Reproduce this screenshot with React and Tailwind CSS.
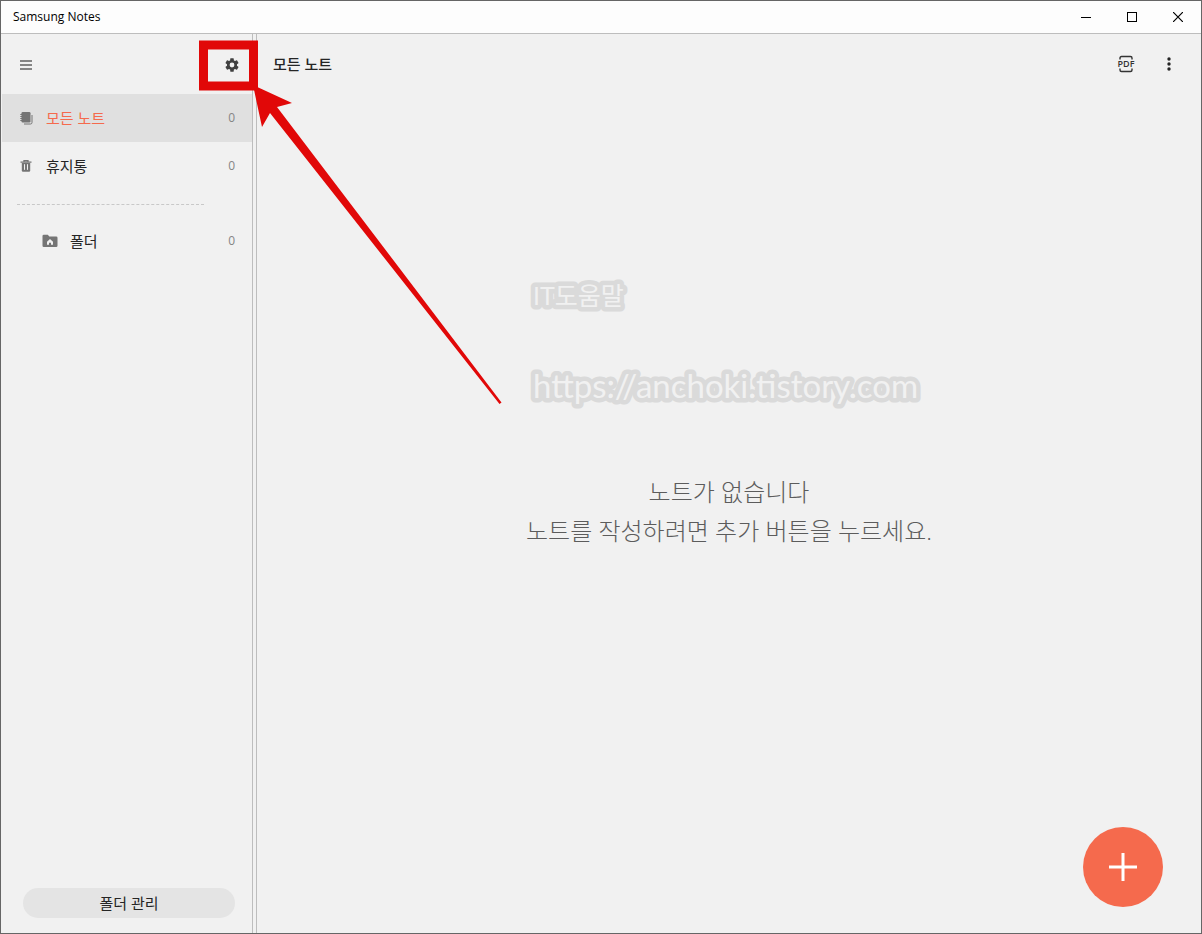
function MenuIcon() {
  return (
    <svg width="12" height="10" viewBox="0 0 12 10" fill="#858585">
      <rect width="12" height="2" />
      <rect y="4" width="12" height="2" />
      <rect y="8" width="12" height="2" />
    </svg>
  );
}

function GearIcon() {
  return (
    <svg width="16" height="16" viewBox="0 0 24 24" fill="#404040">
      <path d="M19.43 12.98c.04-.32.07-.64.07-.98s-.03-.66-.07-.98l2.11-1.65c.19-.15.24-.42.12-.64l-2-3.46c-.12-.22-.39-.3-.61-.22l-2.49 1c-.52-.4-1.08-.73-1.69-.98l-.38-2.65A.49.49 0 0 0 14 2h-4c-.25 0-.46.18-.49.42l-.38 2.65c-.61.25-1.17.59-1.69.98l-2.49-1c-.23-.09-.49 0-.61.22l-2 3.46c-.13.22-.07.49.12.64l2.11 1.65c-.04.32-.07.65-.07.98s.03.66.07.98l-2.11 1.65c-.19.15-.24.42-.12.64l2 3.46c.12.22.39.3.61.22l2.49-1c.52.4 1.08.73 1.69.98l.38 2.65c.03.24.24.42.49.42h4c.25 0 .46-.18.49-.42l.38-2.65c.61-.25 1.17-.59 1.69-.98l2.49 1c.23.09.49 0 .61-.22l2-3.46c.12-.22.07-.49-.12-.64l-2.11-1.65zM12 15.6a3.6 3.6 0 1 1 0-7.2 3.6 3.6 0 0 1 0 7.2z" />
    </svg>
  );
}

function NotesIcon() {
  return (
    <svg width="13" height="13" viewBox="0 0 13 13">
      <rect x="1.500" width="9" height="10.500" rx="1.2" fill="#757575" />
      <path d="M.3 2.500h2M.3 4.500h2M.3 6.500h2M.3 8.500h2" stroke="#757575" strokeWidth="1" />
      <path d="M12 3v7.500q0 1.500-1.500 1.500H4" stroke="#757575" strokeWidth="1" fill="none" />
    </svg>
  );
}

function TrashIcon() {
  return (
    <svg width="12" height="12" viewBox="0 0 12 12" fill="none" stroke="#757575">
      <path d="M.5 2.200h11M4 2V.7h4V2" strokeWidth="1.3" />
      <path d="M1.800 3v7.500q0 1.200 1.200 1.200h6q1.200 0 1.200-1.200V3z" fill="#757575" stroke="none" />
      <path d="M4.500 4.200v5.600M7.500 4.200v5.600" stroke="#f1f1f1" strokeWidth="1" />
    </svg>
  );
}

function FolderIcon() {
  return (
    <svg width="16" height="14" viewBox="0 0 16 14">
      <path d="M.5 2q0-1.300 1.300-1.300h4L7.300 2.400h6.900q1.300 0 1.300 1.300v8q0 1.300-1.300 1.300H1.800Q.5 13 .5 11.700z" fill="#757575" />
      <path d="M8 5 5 7.700v3h2V8.800h2v1.900h2v-3z" fill="#f1f1f1" />
    </svg>
  );
}

function PdfIcon() {
  return (
    <svg width="18" height="18" viewBox="0 0 18 18">
      <path d="M3 4.500V3q0-1.500 1.500-1.500h9Q15 1.500 15 3v1.500M3 13.500V15q0 1.500 1.500 1.500h9q1.500 0 1.500-1.500v-1.500" fill="none" stroke="#333" strokeWidth="1.4" />
      <text x="9" y="12" textAnchor="middle" fontSize="9" fontWeight="600" fill="#333" fontFamily="Open Sans, sans-serif">PDF</text>
    </svg>
  );
}

function MoreIcon() {
  return (
    <svg width="4" height="14" viewBox="0 0 4 14" fill="#252525">
      <circle cx="2" cy="2" r="1.700" />
      <circle cx="2" cy="7" r="1.700" />
      <circle cx="2" cy="12" r="1.700" />
    </svg>
  );
}

function TitleBar() {
  const control = "flex w-[46px] items-center justify-center";
  return (
    <header className="flex h-[33px] shrink-0 justify-between border-b border-[#bdbdbd] bg-[#fdfdfd]">
      <h1 className="self-center pl-3 text-xs text-black">Samsung Notes</h1>
      <div className="flex">
        <button aria-label="최소화" className={control}>
          <svg width="10" height="1" viewBox="0 0 10 1">
            <rect width="10" height="1" />
          </svg>
        </button>
        <button aria-label="최대화" className={control}>
          <svg width="10" height="10" viewBox="0 0 10 10" fill="none" stroke="#000">
            <rect x=".5" y=".5" width="9" height="9" />
          </svg>
        </button>
        <button aria-label="닫기" className={control}>
          <svg width="10" height="10" viewBox="0 0 10 10" stroke="#000" strokeWidth="1.2">
            <path d="m0 0 10 10m0-10L0 10" />
          </svg>
        </button>
      </div>
    </header>
  );
}

function Sidebar() {
  return (
    <aside className="flex w-[251px] shrink-0 flex-col">
      <div className="flex h-[61px] items-center justify-between pr-3 pl-[19px]">
        <button aria-label="메뉴">
          <MenuIcon />
        </button>
        <button aria-label="설정">
          <GearIcon />
        </button>
      </div>

      <nav className="-mt-px text-[15px] text-[#252525]">
        <a href="#all" className="ml-px flex h-12 items-center bg-[#e0e0e0] pr-[17px] pl-[18px] text-[#f56a4d]">
          <NotesIcon />
          <span className="ml-[13px] flex-1">모든 노트</span>
          <span className="text-xs text-[#858585]">0</span>
        </a>
        <a href="#trash" className="ml-px flex h-12 items-center pr-[17px] pl-[18px]">
          <TrashIcon />
          <span className="ml-3.5 flex-1">휴지통</span>
          <span className="text-xs text-[#858585]">0</span>
        </a>
        <hr className="mt-3.5 mr-12 ml-4 border-dashed border-[#c8c8c8]" />
        <a href="#folders" className="mt-3 flex h-12 items-center pr-[17px] pl-[41px]">
          <FolderIcon />
          <span className="ml-3 flex-1">폴더</span>
          <span className="text-xs text-[#858585]">0</span>
        </a>
      </nav>

      <button className="mt-auto mr-[17px] mb-[15px] ml-[22px] h-[30px] rounded-full bg-[#e4e4e4] text-[15px] text-[#252525]">
        폴더 관리
      </button>
    </aside>
  );
}

// Red frame around the settings button and the arrow pointing at it
function Annotation() {
  return (
    <svg className="pointer-events-none absolute -top-px -left-px" width="520" height="420" viewBox="0 0 520 420">
      <rect x="203.500" y="45" width="50" height="41" fill="none" stroke="#e10808" strokeWidth="9" />
      <path d="M253 85 292 103 277 107 501.500 402.500 499.500 404 270 113 262 127z" fill="#e10808" />
    </svg>
  );
}

function Watermark() {
  return (
    <svg
      width="402"
      height="184"
      viewBox="0 0 402 184"
      fill="#f1f1f1"
      stroke="#dadada"
      strokeWidth="9"
      strokeLinejoin="round"
      paintOrder="stroke"
      fontFamily="Lato, Noto Sans CJK KR, sans-serif"
    >
      <text x="5" y="59" fontSize="25">IT도움말</text>
      <text x="5" y="152" fontSize="33">https://anchoki.tistory.com</text>
    </svg>
  );
}

export default function App() {
  return (
    <div className="relative flex h-screen flex-col border border-[#666] bg-[#f1f1f1] font-['Open_Sans','Noto_Sans_CJK_KR',sans-serif]">
      <TitleBar />
      <div className="flex min-h-0 flex-1">
        <Sidebar />
        <div className="w-[5px] shrink-0 border-x border-[#bdbdbd]" />

        <main className="relative flex min-w-0 flex-1 flex-col">
          <div className="flex h-[60px] shrink-0 items-center pr-[30px] pl-4">
            <h2 className="flex-1 text-[15px] font-medium text-[#252525]">모든 노트</h2>
            <button aria-label="PDF 가져오기">
              <PdfIcon />
            </button>
            <button aria-label="더보기" className="ml-8">
              <MoreIcon />
            </button>
          </div>

          <section className="flex flex-1 flex-col items-center pt-[152px]">
            <Watermark />
            <div className="mt-[42px] text-center text-2xl leading-[39px] font-light text-[#5c5c5c]">
              <p>노트가 없습니다</p>
              <p>노트를 작성하려면 추가 버튼을 누르세요.</p>
            </div>
          </section>

          <button
            aria-label="노트 추가"
            className="absolute right-[38px] bottom-[26px] flex size-20 items-center justify-center rounded-full bg-[#f56a4d]"
          >
            <svg width="30" height="30" viewBox="0 0 30 30" stroke="#fff" strokeWidth="3">
              <path d="M15 1v28M1 15h28" />
            </svg>
          </button>
        </main>
      </div>
      <Annotation />
    </div>
  );
}
